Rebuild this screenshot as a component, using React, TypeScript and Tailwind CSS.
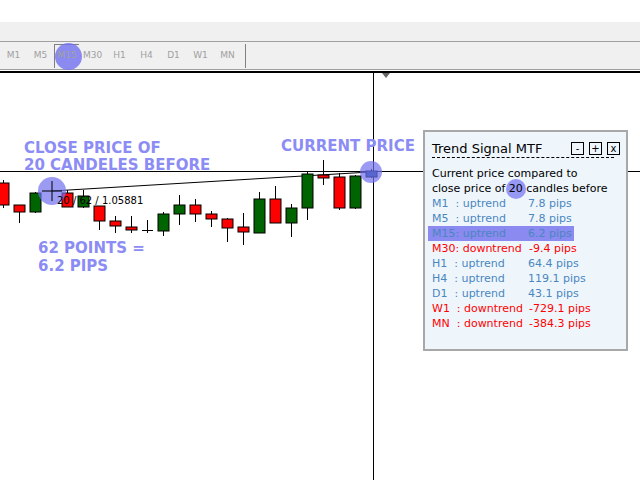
import React from 'react';

type Candle = { x: number; o: number; c: number; h: number; l: number; col: string };

const candles: Candle[] = [
  { x: 3, o: 183, c: 205, h: 180, l: 208, col: 'red' },
  { x: 19, o: 205, c: 212, h: 205, l: 223, col: 'red' },
  { x: 35, o: 193, c: 212, h: 192, l: 213, col: 'green' },
  { x: 67, o: 193, c: 207, h: 190, l: 207, col: 'red' },
  { x: 83, o: 196, c: 207, h: 190, l: 208, col: 'green' },
  { x: 99, o: 206, c: 221, h: 206, l: 230, col: 'red' },
  { x: 115, o: 221, c: 226, h: 216, l: 233, col: 'red' },
  { x: 131, o: 227, c: 230, h: 216, l: 233, col: 'red' },
  { x: 147, o: 230, c: 231, h: 220, l: 233, col: 'doji' },
  { x: 163, o: 214, c: 231, h: 212, l: 236, col: 'green' },
  { x: 179, o: 205, c: 214, h: 195, l: 225, col: 'green' },
  { x: 195, o: 205, c: 214, h: 199, l: 222, col: 'red' },
  { x: 211, o: 214, c: 219, h: 211, l: 227, col: 'red' },
  { x: 227, o: 219, c: 228, h: 218, l: 242, col: 'red' },
  { x: 243, o: 227, c: 232, h: 213, l: 245, col: 'red' },
  { x: 259, o: 199, c: 233, h: 192, l: 233, col: 'green' },
  { x: 275, o: 199, c: 223, h: 186, l: 223, col: 'red' },
  { x: 291, o: 208, c: 223, h: 204, l: 237, col: 'green' },
  { x: 307, o: 174, c: 208, h: 172, l: 220, col: 'green' },
  { x: 323, o: 175, c: 178, h: 160, l: 185, col: 'red' },
  { x: 339, o: 177, c: 208, h: 173, l: 210, col: 'red' },
  { x: 355, o: 176, c: 208, h: 175, l: 209, col: 'green' },
  { x: 371, o: 171, c: 177, h: 169, l: 178, col: 'blue' },
];

const fill = (c: string) => (c === 'red' ? '#ff0000' : c === 'green' ? '#006400' : c === 'blue' ? '#1e4f8c' : '#000');

const frames = ['M1', 'M5', 'M15', 'M30', 'H1', 'H4', 'D1', 'W1', 'MN'];

const rows = [
  { t: 'M1  : uptrend', p: '7.8 pips', red: false },
  { t: 'M5  : uptrend', p: '7.8 pips', red: false },
  { t: 'M15: uptrend', p: '6.2 pips', red: false, hl: true },
  { t: 'M30: downtrend', p: '-9.4 pips', red: true },
  { t: 'H1  : uptrend', p: '64.4 pips', red: false },
  { t: 'H4  : uptrend', p: '119.1 pips', red: false },
  { t: 'D1  : uptrend', p: '43.1 pips', red: false },
  { t: 'W1  : downtrend', p: '-729.1 pips', red: true },
  { t: 'MN  : downtrend', p: '-384.3 pips', red: true },
];

const font = { fontFamily: '"DejaVu Sans", Verdana, sans-serif' };

const App: React.FC = () => {
  return (
    <div className="relative w-[640px] h-[480px] bg-white overflow-hidden" style={font}>
      {/* Toolbar */}
      <div className="h-[22px] bg-white" />
      <div className="h-[20px] bg-[#f0f0f0] border-b border-[#a0a0a0]" />
      <div className="h-[27px] bg-[#f0f0f0] flex items-center">
        <div className="flex items-center h-full">
          {frames.map(f => (
            <div
              key={f}
              className={`h-[24px] flex items-center justify-center text-[9px] text-[#a0a0a0] ${f === 'M15' ? 'w-[25px] border-l border-t border-[#808080] relative' : 'w-[27px]'}`}
            >
              {f === 'M15' && <span className="absolute left-[0px] top-[-2px] w-[27px] h-[27px] rounded-full bg-[#7070f0]/80" />}
              <span className="relative">{f}</span>
            </div>
          ))}
          <div className="ml-[4px] h-[24px] border-l border-[#808080]" />
        </div>
      </div>
      <div className="h-[4px] border-t border-[#a0a0a0] border-b-2 border-b-black" />

      {/* Chart */}
      <svg className="absolute left-0 top-0" width="640" height="480">
        <line x1="0" y1="171.5" x2="640" y2="171.5" stroke="#000" />
        <line x1="373.5" y1="73" x2="373.5" y2="480" stroke="#000" />
        <polygon points="382,73 390,73 386,78" fill="#666" />
        <line x1="52" y1="191" x2="370" y2="172" stroke="#000" />
        {candles.map(c => {
          const top = Math.min(c.o, c.c);
          const bot = Math.max(c.o, c.c);
          return (
            <g key={c.x}>
              <line x1={c.x + 0.5} y1={c.h} x2={c.x + 0.5} y2={c.l} stroke="#000" />
              <rect x={c.x - 5} y={top} width={11} height={Math.max(bot - top, 1)} fill={fill(c.col)} stroke="#000" strokeWidth={c.col === 'doji' ? 0 : 1} />
            </g>
          );
        })}
        <circle cx="52" cy="191" r="14" fill="#7070f0" fillOpacity="0.7" />
        <line x1="42" y1="191" x2="62" y2="191" stroke="#000" />
        <line x1="52" y1="181" x2="52" y2="201" stroke="#000" />
        <circle cx="371" cy="172" r="11" fill="#7070f0" fillOpacity="0.7" />
        <text x="57" y="204" fontSize="10" fill="#000" style={font}>20 / 62 / 1.05881</text>
      </svg>

      {/* Annotations */}
      <div className="absolute left-[24px] top-[140px] text-[15px] font-bold leading-[17px] text-[#8c8cf5]">
        <div>CLOSE PRICE OF</div>
        <div>20 CANDELES BEFORE</div>
      </div>
      <div className="absolute left-[281px] top-[135px] text-[15px] font-bold text-[#8c8cf5]">CURRENT PRICE</div>
      <div className="absolute left-[38px] top-[239px] text-[15px] font-bold leading-[18px] text-[#8c8cf5]">
        <div>62 POINTS =</div>
        <div>6.2 PIPS</div>
      </div>

      {/* Panel */}
      <div className="absolute left-[423px] top-[130px] w-[205px] h-[221px] bg-[#eef6fc] border-2 border-[#a8a8a8] pl-[7px] pt-[9px] text-[11px] leading-[15px]">
        <div className="flex items-center justify-between pr-[6px]">
          <span className="text-[13px] text-black">Trend Signal MTF</span>
          <div className="flex gap-[5px]">
            {['-', '+', 'x'].map(s => (
              <span key={s} className="w-[13px] h-[13px] border border-black flex items-center justify-center text-[10px] leading-none text-black">{s}</span>
            ))}
          </div>
        </div>
        <div className="mt-[1px] mr-[12px] border-t border-dashed border-black" />
        <div className="mt-[8px] text-black">Current price compared to</div>
        <div className="text-black relative">
          close price of <span className="relative inline-block"><span className="absolute left-[-3px] top-[-2px] w-[20px] h-[20px] rounded-full bg-[#7070f0]/70" /><span className="relative">20</span></span> candles before
        </div>
        {rows.map(r => (
          <div
            key={r.t}
            className={`flex whitespace-pre ${r.red ? 'text-[#ff0000]' : 'text-[#4a86c0]'} ${r.hl ? 'bg-[#8a8af0] w-[146px] -ml-[4px] pl-[4px] text-[#4a70b8]' : ''}`}
          >
            <span className={r.red ? 'w-[97px]' : 'w-[96px]'}>{r.t}</span>
            <span>{r.p}</span>
          </div>
        ))}
      </div>
    </div>
  );
};

export default App;
